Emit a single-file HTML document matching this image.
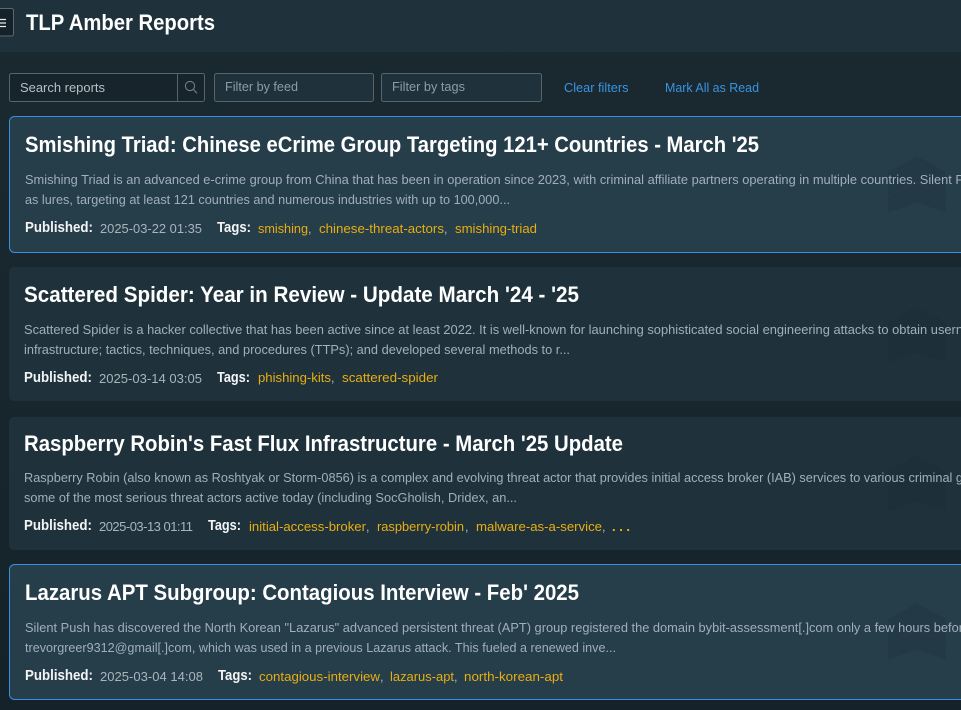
<!DOCTYPE html>
<html lang="en"><head><meta charset="utf-8"><title>TLP Amber Reports</title>
<style>
html,body{margin:0;padding:0;width:961px;height:710px;overflow:hidden;background:#17242b}
svg{display:block}
text{font-family:"Liberation Sans",sans-serif;white-space:pre}
.h{font-weight:700;font-size:22px;fill:#fff}
.d{font-size:12.5px;fill:#a0b0ba}
.p{font-weight:700;font-size:14.5px;fill:#f2f4f5}
.t{font-size:13px;fill:#a9b5bb}
.g{font-size:13px;fill:#e8ae12}
.c{font-size:12.5px;fill:#a9b5bb}
.l{font-size:13px;fill:#3a93e0}
.f{font-size:13px;fill:#8f9ca3}
</style></head><body>
<svg width="961" height="710" viewBox="0 0 961 710" xmlns="http://www.w3.org/2000/svg">
<defs>
<linearGradient id="bg" x1="0" y1="0" x2="0" y2="1"><stop offset="0" stop-color="#1b2a31"/><stop offset="1" stop-color="#15222a"/></linearGradient>
<g id="chev" stroke-width="3" stroke-linejoin="round">
<path d="M917 2 L944.500 17 V37 L917 24 L889.500 37 V17 Z"/>
<path d="M917 29 L944.500 41 V54.500 L917 45 L889.500 54.500 V41 Z"/>
</g>
</defs>
<rect width="961" height="710" fill="url(#bg)"/>
<rect width="961" height="52" fill="#1f323b"/>
<rect x="-6" y="8.500" width="19.500" height="27.500" rx="2" fill="#15222a" stroke="#5b6a70"/>
<path d="M0 19.500h6M0 23h6M0 26.500h6" stroke="#e6eaec" stroke-width="1.200"/>
<text x="26" y="30" textLength="189" lengthAdjust="spacingAndGlyphs" style="font-size:22px;font-weight:700;fill:#fff">TLP Amber Reports</text>

<rect x="9.500" y="73.500" width="195" height="28" rx="2" fill="#17242b" stroke="#56656c"/>
<path d="M177.500 74V101" stroke="#56656c"/>
<circle cx="190" cy="86" r="4.600" fill="none" stroke="#6f7d84" stroke-width="1.100"/>
<path d="M193.400 89.400L197 93.400" stroke="#6f7d84" stroke-width="1.200"/>
<text x="20" y="92" textLength="85" lengthAdjust="spacingAndGlyphs" style="font-size:13px;fill:#b6c0c5">Search reports</text>
<rect x="214.500" y="73.500" width="159" height="28" rx="2" fill="#1f323b" stroke="#56656c"/>
<text class="f" x="225" y="91" textLength="73" lengthAdjust="spacingAndGlyphs">Filter by feed</text>
<rect x="381.500" y="73.500" width="160" height="28" rx="2" fill="#1f323b" stroke="#56656c"/>
<text class="f" x="392" y="91" textLength="73" lengthAdjust="spacingAndGlyphs">Filter by tags</text>
<text class="l" x="564" y="92" textLength="64.500" lengthAdjust="spacingAndGlyphs">Clear filters</text>
<text class="l" x="665" y="92" textLength="94" lengthAdjust="spacingAndGlyphs">Mark All as Read</text>

<!-- card 1 -->
<rect x="9.500" y="116.500" width="970" height="136" rx="5" fill="#263d4a" stroke="#3a90e0"/>
<use href="#chev" y="156" fill="#233945" stroke="#233945"/>
<text class="h" x="25" y="152" textLength="734" lengthAdjust="spacingAndGlyphs">Smishing Triad: Chinese eCrime Group Targeting 121+ Countries - March '25</text>
<text class="d" x="25" y="184" textLength="939" lengthAdjust="spacingAndGlyphs">Smishing Triad is an advanced e-crime group from China that has been in operation since 2023, with criminal affiliate partners operating in multiple countries. Silent P</text>
<text class="d" x="25" y="204" textLength="485" lengthAdjust="spacingAndGlyphs">as lures, targeting at least 121 countries and numerous industries with up to 100,000...</text>
<text class="p" x="25" y="232" textLength="68" lengthAdjust="spacingAndGlyphs">Published:</text>
<text class="t" x="100" y="233" textLength="102" lengthAdjust="spacingAndGlyphs">2025-03-22 01:35</text>
<text class="p" x="217" y="232" textLength="34" lengthAdjust="spacingAndGlyphs">Tags:</text>
<text class="g" x="258" y="233" textLength="50" lengthAdjust="spacingAndGlyphs">smishing</text><text class="c" x="308" y="233">,</text>
<text class="g" x="319" y="233" textLength="125" lengthAdjust="spacingAndGlyphs">chinese-threat-actors</text><text class="c" x="444" y="233">,</text>
<text class="g" x="455" y="233" textLength="82" lengthAdjust="spacingAndGlyphs">smishing-triad</text>

<!-- card 2 -->
<rect x="9" y="267" width="970" height="134" rx="5" fill="#1f323b"/>
<use href="#chev" y="306" fill="#1d3039" stroke="#1d3039"/>
<text class="h" x="24" y="302" textLength="555" lengthAdjust="spacingAndGlyphs">Scattered Spider: Year in Review - Update March '24 - '25</text>
<text class="d" x="24" y="334" textLength="939" lengthAdjust="spacingAndGlyphs">Scattered Spider is a hacker collective that has been active since at least 2022. It is well-known for launching sophisticated social engineering attacks to obtain usern</text>
<text class="d" x="24" y="354" textLength="546" lengthAdjust="spacingAndGlyphs">infrastructure; tactics, techniques, and procedures (TTPs); and developed several methods to r...</text>
<text class="p" x="24" y="382" textLength="68" lengthAdjust="spacingAndGlyphs">Published:</text>
<text class="t" x="99" y="383" textLength="103" lengthAdjust="spacingAndGlyphs">2025-03-14 03:05</text>
<text class="p" x="217" y="382" textLength="33" lengthAdjust="spacingAndGlyphs">Tags:</text>
<text class="g" x="258" y="382" textLength="73" lengthAdjust="spacingAndGlyphs">phishing-kits</text><text class="c" x="331" y="382">,</text>
<text class="g" x="342" y="382" textLength="96" lengthAdjust="spacingAndGlyphs">scattered-spider</text>

<!-- card 3 -->
<rect x="9" y="417" width="970" height="133" rx="5" fill="#1f323b"/>
<use href="#chev" y="455" fill="#1d3039" stroke="#1d3039"/>
<text class="h" x="24" y="451" textLength="599" lengthAdjust="spacingAndGlyphs">Raspberry Robin's Fast Flux Infrastructure - March '25 Update</text>
<text class="d" x="24" y="482" textLength="939" lengthAdjust="spacingAndGlyphs">Raspberry Robin (also known as Roshtyak or Storm-0856) is a complex and evolving threat actor that provides initial access broker (IAB) services to various criminal g</text>
<text class="d" x="24" y="502" textLength="493" lengthAdjust="spacingAndGlyphs">some of the most serious threat actors active today (including SocGholish, Dridex, an...</text>
<text class="p" x="24" y="530" textLength="68" lengthAdjust="spacingAndGlyphs">Published:</text>
<text class="t" x="99" y="531" textLength="94" lengthAdjust="spacing">2025-03-13 01:11</text>
<text class="p" x="208" y="530" textLength="33" lengthAdjust="spacingAndGlyphs">Tags:</text>
<text class="g" x="249" y="531" textLength="117" lengthAdjust="spacingAndGlyphs">initial-access-broker</text><text class="c" x="366" y="531">,</text>
<text class="g" x="377" y="531" textLength="87" lengthAdjust="spacingAndGlyphs">raspberry-robin</text><text class="c" x="465" y="531">,</text>
<text class="g" x="476" y="531" textLength="126" lengthAdjust="spacingAndGlyphs">malware-as-a-service</text><text class="c" x="602" y="531">,</text>
<text x="612" y="531" textLength="18" style="font-size:13px;font-weight:700;fill:#f5b70f">...</text>

<!-- card 4 -->
<rect x="9.500" y="564.500" width="970" height="135" rx="5" fill="#263d4a" stroke="#3a90e0"/>
<use href="#chev" y="603" fill="#233945" stroke="#233945"/>
<text class="h" x="25" y="600" textLength="554" lengthAdjust="spacingAndGlyphs">Lazarus APT Subgroup: Contagious Interview - Feb' 2025</text>
<text class="d" x="25" y="632" textLength="938" lengthAdjust="spacingAndGlyphs">Silent Push has discovered the North Korean "Lazarus" advanced persistent threat (APT) group registered the domain bybit-assessment[.]com only a few hours befor</text>
<text class="d" x="25" y="652" textLength="591" lengthAdjust="spacingAndGlyphs">trevorgreer9312@gmail[.]com, which was used in a previous Lazarus attack. This fueled a renewed inve...</text>
<text class="p" x="25" y="680" textLength="68" lengthAdjust="spacingAndGlyphs">Published:</text>
<text class="t" x="100" y="681" textLength="103" lengthAdjust="spacingAndGlyphs">2025-03-04 14:08</text>
<text class="p" x="218" y="680" textLength="34" lengthAdjust="spacingAndGlyphs">Tags:</text>
<text class="g" x="259" y="681" textLength="121" lengthAdjust="spacingAndGlyphs">contagious-interview</text><text class="c" x="380" y="681">,</text>
<text class="g" x="390" y="681" textLength="64" lengthAdjust="spacingAndGlyphs">lazarus-apt</text><text class="c" x="454" y="681">,</text>
<text class="g" x="464" y="681" textLength="99" lengthAdjust="spacingAndGlyphs">north-korean-apt</text>
</svg>
</body></html>
